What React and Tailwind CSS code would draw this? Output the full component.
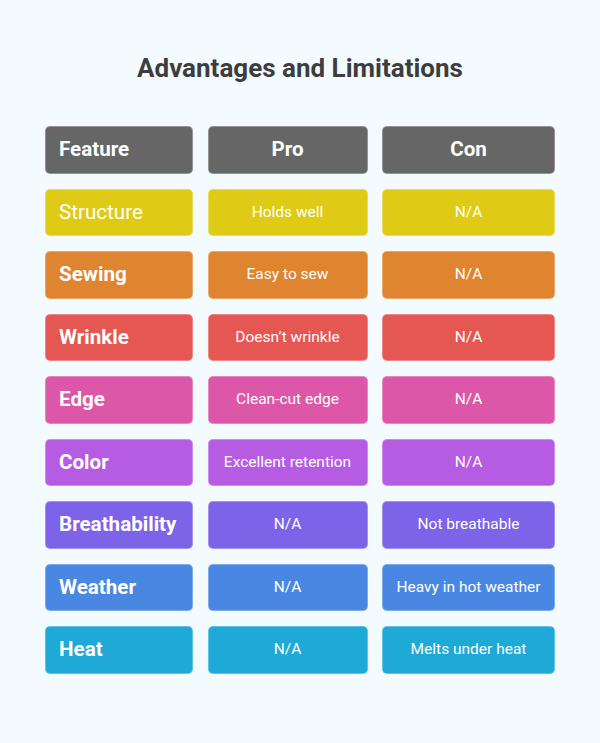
const rows = [
  { feature: 'Structure', pro: 'Holds well', con: 'N/A', bg: 'bg-[#dfcb15]', regular: true },
  { feature: 'Sewing', pro: 'Easy to sew', con: 'N/A', bg: 'bg-[#df842f]' },
  { feature: 'Wrinkle', pro: 'Doesn’t wrinkle', con: 'N/A', bg: 'bg-[#e45753]' },
  { feature: 'Edge', pro: 'Clean-cut edge', con: 'N/A', bg: 'bg-[#dc57a8]' },
  { feature: 'Color', pro: 'Excellent retention', con: 'N/A', bg: 'bg-[#b65ce2]' },
  { feature: 'Breathability', pro: 'N/A', con: 'Not breathable', bg: 'bg-[#7c63e7]' },
  { feature: 'Weather', pro: 'N/A', con: 'Heavy in hot weather', bg: 'bg-[#4a87e3]' },
  { feature: 'Heat', pro: 'N/A', con: 'Melts under heat', bg: 'bg-[#1ea9d7]' },
];

function Cell({ bg, className, children }) {
  return (
    <div
      className={`flex h-[47.5px] items-center rounded-[5px] border border-white/30 text-white ${bg} ${className}`}
    >
      {children}
    </div>
  );
}

export default function App() {
  return (
    <div
      className="min-h-[743px] w-[600px] bg-[#f3fbfe] pt-[52px]"
      style={{ fontFamily: 'Roboto, "Liberation Sans", sans-serif' }}
    >
      <h1 className="text-center text-[26px] font-bold leading-[33px] text-[#3d3d3d]">
        Advantages and Limitations
      </h1>
      <div className="ml-[45px] mt-[41px] grid grid-cols-[148px_160px_173px] gap-x-[14.5px] gap-y-[15px]">
        <Cell bg="bg-[#666666]" className="pl-[13px] text-[20.6px] font-bold">
          Feature
        </Cell>
        <Cell bg="bg-[#666666]" className="justify-center text-[20.6px] font-bold">
          Pro
        </Cell>
        <Cell bg="bg-[#666666]" className="justify-center text-[20.6px] font-bold">
          Con
        </Cell>
        {rows.map((r) => (
          <div key={r.feature} className="contents">
            <Cell
              bg={r.bg}
              className={`pl-[13px] text-[20.6px] ${r.regular ? 'font-normal' : 'font-bold'}`}
            >
              {r.feature}
            </Cell>
            <Cell bg={r.bg} className="justify-center text-[15.5px]">
              {r.pro}
            </Cell>
            <Cell bg={r.bg} className="justify-center text-[15.5px]">
              {r.con}
            </Cell>
          </div>
        ))}
      </div>
    </div>
  );
}
